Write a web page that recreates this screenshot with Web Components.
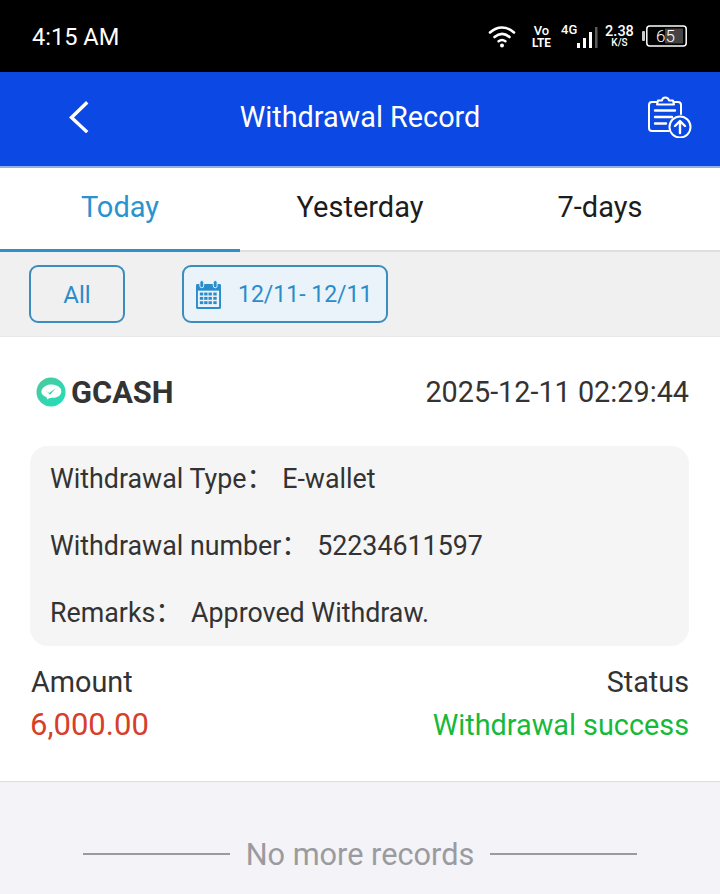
<!DOCTYPE html>
<html>
<head>
<meta charset="utf-8">
<title>Withdrawal Record</title>
<style>
  html, body { margin: 0; padding: 0; }
  body { width: 720px; height: 894px; overflow: hidden; font-family: Roboto, "Liberation Sans", "Noto Sans CJK SC", sans-serif; background: #f3f3f8; }
</style>
</head>
<body>
<status-bar></status-bar>
<nav-header>Withdrawal Record</nav-header>
<tab-bar></tab-bar>
<filter-bar></filter-bar>
<record-card></record-card>
<list-end>No more records</list-end>

<script>
class StatusBar extends HTMLElement {
  constructor() {
    super();
    this.shadowDOM = this.attachShadow({mode: 'open'});
  }
  connectedCallback() {
    this.shadowDOM.innerHTML = `
    <style>
      :host { display: flex; height: 72px; background: #000; color: #fff; align-items: center; justify-content: space-between; padding: 0 33px 0 32px; box-sizing: border-box; }
      .time { font-size: 23.6px; padding-top: 2px; }
      .right { display: flex; align-items: center; }
      svg { display: block; }
      .stack { display: flex; flex-direction: column; align-items: center; font-weight: 500; line-height: 1; }
      .volte { font-size: 13px; margin-left: 15px; width: 21px; }
      .volte span:last-child { line-height: 11px; font-weight: 700; transform: scaleX(.9); }
      .net { position: relative; margin-left: 9px; width: 37px; height: 26px; }
      .net b { position: absolute; left: 0; top: -1px; font-size: 13px; font-weight: 500; line-height: 15px; }
      .net svg { position: absolute; left: 0; top: 0; }
      .speed { margin-left: 7px; width: 29px; }
      .speed span:first-child { font-size: 14.5px; line-height: 13px; }
      .speed span:last-child { font-size: 10px; line-height: 10px; }
      .batt { position: relative; margin-left: 8px; width: 45px; height: 22px; }
      .batt span { position: absolute; left: 14px; top: 0; font-size: 17px; line-height: 22px; font-weight: 300; }
      .batt svg { position: absolute; left: 0; top: 0; }
    </style>
    <span class="time">4:15 AM</span>
    <div class="right">
      <svg width="28" height="24" viewBox="0 0 28 24" fill="none" stroke="#fff" stroke-width="2.6" stroke-linecap="round">
        <path d="M2 8.500C9.500 1.800 18.500 1.800 26 8.500"/>
        <path d="M6.500 13C11.200 9 16.800 9 21.500 13"/>
        <path d="M10.600 17.200C12.800 15.600 15.200 15.600 17.400 17.200"/>
        <circle cx="14" cy="21.400" r="2" fill="#fff" stroke="none"/>
      </svg>
      <div class="stack volte"><span>Vo</span><span>LTE</span></div>
      <div class="net">
        <b>4G</b>
        <svg width="37" height="26" viewBox="0 0 37 26" fill="#fff">
          <rect x="16" y="20" width="3" height="5"/>
          <rect x="22" y="15" width="3" height="10"/>
          <rect x="28" y="9" width="3" height="16"/>
          <rect x="34" y="4" width="2.500" height="21" fill="#5a5a5a"/>
        </svg>
      </div>
      <div class="stack speed"><span>2.38</span><span>K/S</span></div>
      <div class="batt">
        <svg width="45" height="22" viewBox="0 0 45 22" fill="none">
          <rect x="0" y="6" width="3" height="10" rx="1" fill="#ccc"/>
          <rect x="23" y="3.500" width="18" height="15" fill="#444"/>
          <rect x="4.800" y="1" width="39.400" height="20" rx="3" stroke="#fff" stroke-width="1.500"/>
        </svg>
        <span>65</span>
      </div>
    </div>
    `;
  }
}

class NavHeader extends HTMLElement {
  constructor() {
    super();
    this.shadowDOM = this.attachShadow({mode: 'open'});
  }
  connectedCallback() {
    this.shadowDOM.innerHTML = `
    <style>
      :host { display: grid; grid-template-columns: 1fr auto 1fr; height: 96px; box-sizing: border-box; background: #0c48e3; border-bottom: 2px solid #8fb1e6; color: #fff; align-items: center; padding: 0 28px 4px 68px; }
      .title { font-size: 28.800px; transform: translateX(-20px); }
      svg { display: block; }
      .up { justify-self: end; }
    </style>
    <svg width="22" height="32" viewBox="0 0 22 32" fill="none" stroke="#fff" stroke-width="3.400" stroke-linecap="square"><path d="M18 2.500L3.500 16.500L18 30"/></svg>
    <span class="title"><slot></slot></span>
    <svg class="up" width="44" height="42" viewBox="0 0 44 42" fill="none" stroke="#fff" stroke-width="2" stroke-linecap="round" stroke-linejoin="round">
      <path d="M9 6H4a3 3 0 0 0-3 3v23a3 3 0 0 0 3 3h17"/>
      <path d="M26 6h4a3 3 0 0 1 3 3v9"/>
      <path d="M10 4.500h4c.5-4 6-4 7 0h4l1 4H9z"/>
      <path d="M7 14.500h20M7 21h17M7 27.500h11" stroke-width="2.400"/>
      <circle cx="32" cy="31" r="10.500" fill="#0c48e3"/>
      <path d="M32 37V25.500M27 30l5-5 5 5" stroke-width="2.400"/>
    </svg>
    `;
  }
}

class TabBar extends HTMLElement {
  constructor() {
    super();
    this.shadowDOM = this.attachShadow({mode: 'open'});
  }
  connectedCallback() {
    this.shadowDOM.innerHTML = `
    <style>
      :host { display: grid; grid-template-columns: repeat(3, 1fr); height: 84px; background: #fff; font-size: 29px; color: #1c1c1c; }
      div { display: flex; align-items: center; justify-content: center; border-bottom: 2px solid #dedede; padding-bottom: 5px; box-sizing: border-box; }
      .on { color: #2a93cf; border-bottom: 3px solid #2f8fc6; padding-bottom: 4px; }
    </style>
    <div class="on">Today</div>
    <div>Yesterday</div>
    <div>7-days</div>
    `;
  }
}

class FilterBar extends HTMLElement {
  constructor() {
    super();
    this.shadowDOM = this.attachShadow({mode: 'open'});
  }
  connectedCallback() {
    this.shadowDOM.innerHTML = `
    <style>
      :host { display: flex; height: 85px; box-sizing: border-box; background: #f0f0f0; border-bottom: 1px solid #e8e8e8; align-items: flex-start; padding: 13px 0 0 29px; gap: 57px; color: #2a8ccb; font-size: 24px; }
      .btn { box-sizing: border-box; height: 58px; border: 2px solid #3b8dbd; border-radius: 9px; display: flex; align-items: center; }
      .all { width: 96px; justify-content: center; padding-top: 2px; }
      .date { width: 206px; padding-left: 12px; gap: 17px; background: #eaf3fa; font-size: 23px; }
      svg { display: block; }
    </style>
    <div class="btn all">All</div>
    <div class="btn date">
      <svg width="25" height="29" viewBox="0 0 26 30">
        <rect x="0" y="4" width="26" height="26" rx="1.500" fill="#2a8ccb"/>
        <rect x="2" y="11" width="22" height="17" fill="#eaf3fa"/>
        <g fill="#2a8ccb">
          <rect x="4" y="13" width="3.500" height="3"/><rect x="8.500" y="13" width="3.500" height="3"/><rect x="13" y="13" width="3.500" height="3"/><rect x="18" y="13" width="3.500" height="3"/>
          <rect x="4" y="17.500" width="3.500" height="3"/><rect x="8.500" y="17.500" width="3.500" height="3"/><rect x="13" y="17.500" width="3.500" height="3"/><rect x="18" y="17.500" width="3.500" height="3"/>
          <rect x="4" y="22" width="3.500" height="3"/><rect x="8.500" y="22" width="3.500" height="3"/><rect x="13" y="22" width="3.500" height="3"/><rect x="18" y="22" width="3.500" height="3"/>
        </g>
        <rect x="4" y="0.500" width="4" height="7.500" rx="2" fill="#2a8ccb" stroke="#eaf3fa" stroke-width="1"/>
        <rect x="18" y="0.500" width="4" height="7.500" rx="2" fill="#2a8ccb" stroke="#eaf3fa" stroke-width="1"/>
      </svg>
      <span>12/11- 12/11</span>
    </div>
    `;
  }
}

class RecordCard extends HTMLElement {
  constructor() {
    super();
    this.shadowDOM = this.attachShadow({mode: 'open'});
  }
  connectedCallback() {
    this.shadowDOM.innerHTML = `
    <style>
      :host { display: block; height: 445px; box-sizing: border-box; background: #fff; border-bottom: 1px solid #dedede; padding: 0 31px 0 30px; color: #333; font-size: 26.800px; }
      .head { display: flex; height: 109px; align-items: center; justify-content: space-between; box-sizing: border-box; padding-top: 1px; }
      .brand { display: flex; align-items: center; gap: 5px; padding-left: 6px; font-size: 30.8px; font-weight: 700; color: #333; }
      .stamp { font-size: 28.800px; }
      svg { display: block; }
      .info { height: 200px; box-sizing: border-box; background: #f5f5f5; border-radius: 18px; padding: 0 20px; }
      .info div { height: 66.700px; line-height: 66.700px; white-space: pre; }
      .info div:last-child { line-height: 68px; }
      .info span { margin-left: 9px; }
      .sum { display: flex; justify-content: space-between; margin-top: 19px; padding-left: 1px; font-size: 28.800px; }
      .sum > div { display: flex; flex-direction: column; gap: 9px; }
      .sum > div:last-child { align-items: flex-end; }
      .sum span { line-height: 34px; }
      .money { color: #d6402b; font-size: 31px; margin-left: -1px; }
      .ok { color: #17b93a; }
    </style>
    <div class="head">
      <div class="brand">
        <svg width="30" height="30" viewBox="0 0 32 32">
          <defs><linearGradient id="g" x1="0" y1="0" x2="1" y2="1"><stop offset="0" stop-color="#4fc79c"/><stop offset="1" stop-color="#1de0bd"/></linearGradient></defs>
          <circle cx="16" cy="16" r="15.500" fill="url(#g)"/>
          <path d="M6 14c3-7 15-8 20-2 3 5-1 10-7 10-3 0-5 0-7 2l-1-3C7 20 5 17 6 14z" fill="#fff"/>
          <path d="M11 15l3 2 7-5-6 7z" fill="#2dd4ae"/>
        </svg>
        <span>GCASH</span>
      </div>
      <span class="stamp">2025-12-11 02:29:44</span>
    </div>
    <div class="info">
      <div>Withdrawal Type：<span>E-wallet</span></div>
      <div>Withdrawal number：<span>52234611597</span></div>
      <div>Remarks：<span>Approved Withdraw.</span></div>
    </div>
    <div class="sum">
      <div><span>Amount</span><span class="money">6,000.00</span></div>
      <div><span>Status</span><span class="ok">Withdrawal success</span></div>
    </div>
    `;
  }
}

class ListEnd extends HTMLElement {
  constructor() {
    super();
    this.shadowDOM = this.attachShadow({mode: 'open'});
  }
  connectedCallback() {
    this.shadowDOM.innerHTML = `
    <style>
      :host { display: flex; height: 112px; box-sizing: border-box; background: #f3f3f8; align-items: center; justify-content: center; gap: 16px; color: #9b9b9f; font-size: 30.700px; padding-top: 32px; }
      i { display: block; width: 147px; height: 2px; background: #9b9b9f; }
    </style>
    <i></i><span><slot></slot></span><i></i>
    `;
  }
}

customElements.define('status-bar', StatusBar);
customElements.define('nav-header', NavHeader);
customElements.define('tab-bar', TabBar);
customElements.define('filter-bar', FilterBar);
customElements.define('record-card', RecordCard);
customElements.define('list-end', ListEnd);
</script>
</body>
</html>
